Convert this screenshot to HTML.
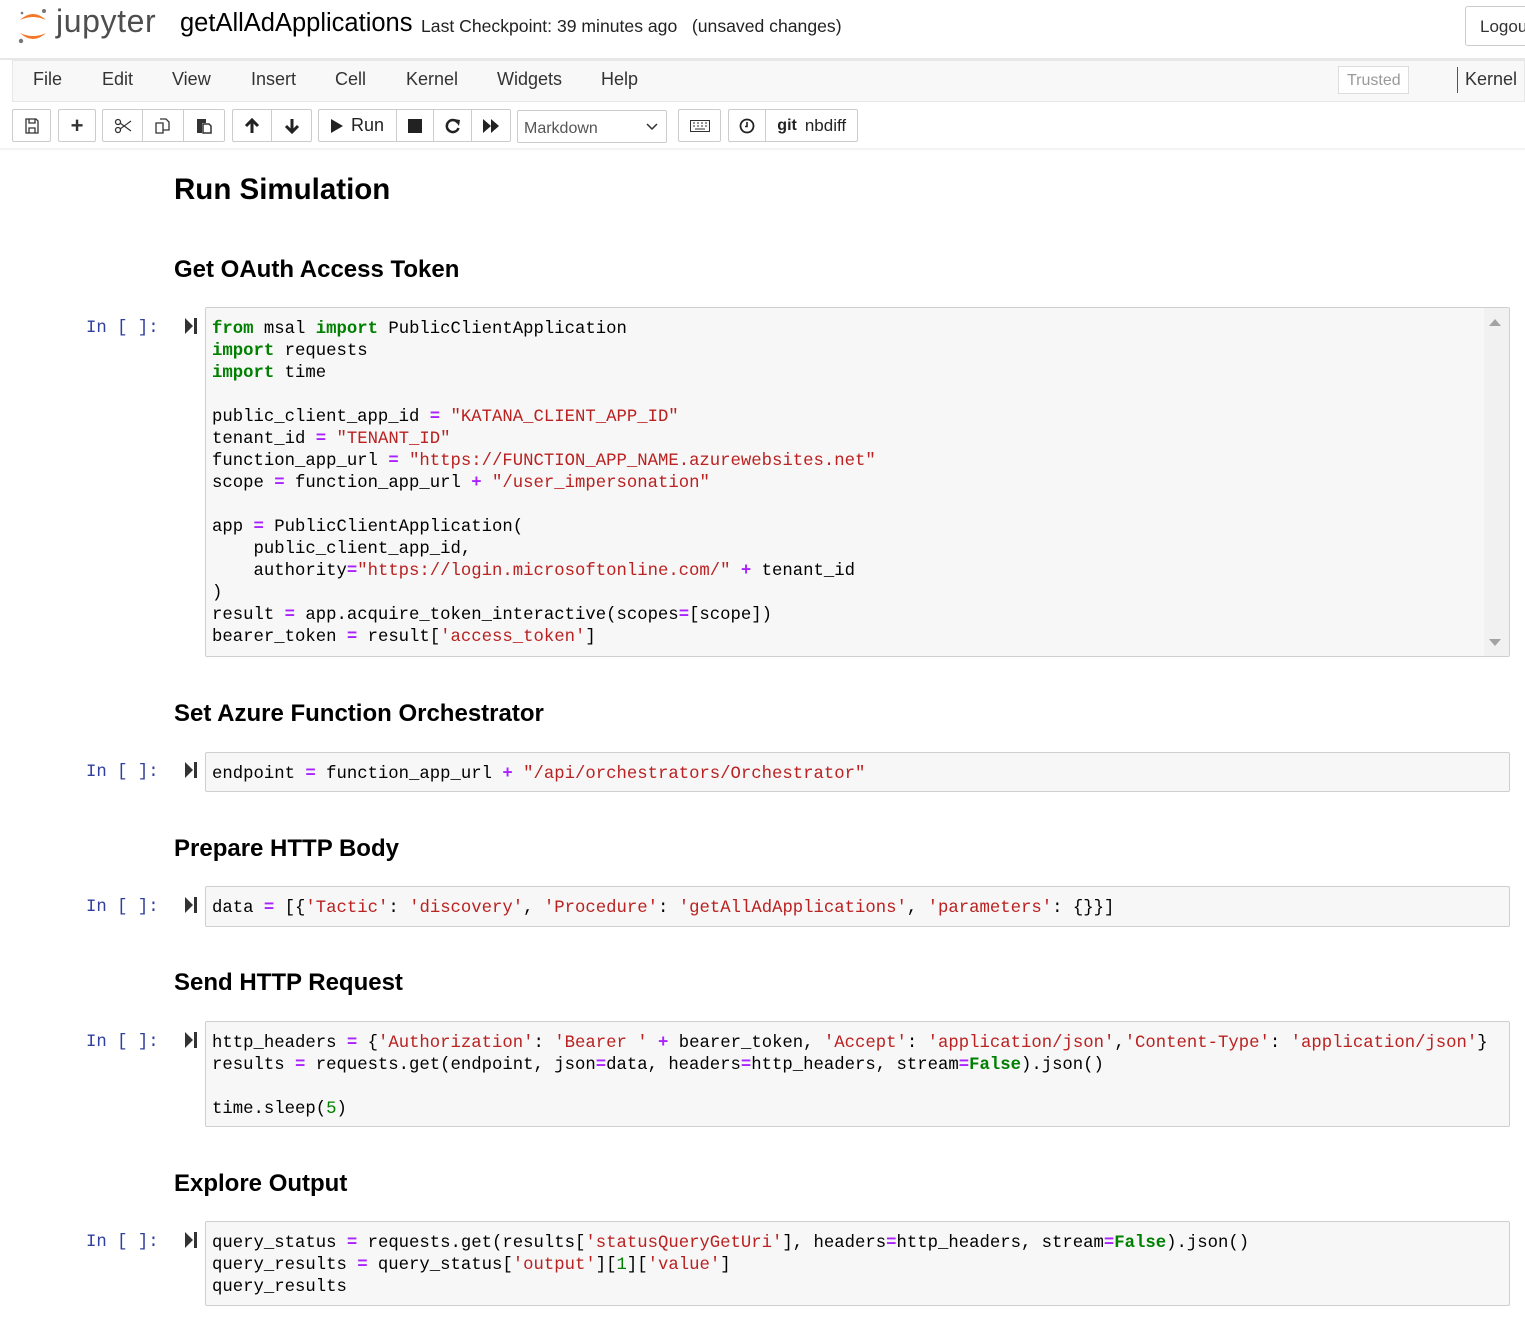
<!DOCTYPE html>
<html><head><meta charset="utf-8">
<style>
*{margin:0;padding:0;box-sizing:border-box}
body{width:1525px;height:1320px;background:#fff;font-family:"Liberation Sans",sans-serif;position:relative;overflow:hidden;color:#000}
.a{position:absolute}
.menu span{position:absolute;top:69px;font-size:18px;color:#333}
.btn{position:absolute;top:109px;height:33px;border:1px solid #ccc;border-radius:2px;background:#fff;display:flex;align-items:center;justify-content:center;font-size:18px;color:#333}
.grp{position:absolute;top:109px;height:33px;border:1px solid #ccc;border-radius:2px;background:#fff;display:flex}
.grp div{display:flex;align-items:center;justify-content:center;border-right:1px solid #ccc;height:100%;font-size:18px;color:#222}
.grp div:last-child{border-right:none}
h1{position:absolute;left:174px;font-size:29.5px;font-weight:bold}
h2{position:absolute;left:174px;font-size:24px;font-weight:bold}
.prompt{position:absolute;left:86px;font-family:"Liberation Mono",monospace;font-size:17.3px;color:#303f9f}
.run{position:absolute;left:185px;width:12px;height:16px}
.cell{position:absolute;left:205px;width:1305px;background:#f7f7f7;border:1px solid #cfcfcf;border-radius:2px;padding:11px 0 0 6px}
pre{font-family:"Liberation Mono",monospace;font-size:17.3px;line-height:22px;color:#000;white-space:pre}
.k{color:#008000;font-weight:bold}.s{color:#ba2121}.o{color:#aa22ff;font-weight:bold}.n{color:#008000}
</style></head><body>
<svg class="a" style="left:16px;top:6px" width="34" height="40" viewBox="0 0 34 40">
<path d="M4 14 Q17 2 30 14 Q17 8 4 14Z" fill="#f37726"/>
<path d="M4 27 Q17 39 30 27 Q17 33 4 27Z" fill="#f37726"/>
<circle cx="28" cy="5" r="2" fill="#767677"/><circle cx="5" cy="35" r="2.2" fill="#767677"/><circle cx="6" cy="7" r="1.3" fill="#767677"/>
</svg>
<div class="a" style="left:56px;top:3px;font-size:32px;color:#4e4e4e;letter-spacing:0.6px">jupyter</div>
<div class="a" style="left:180px;top:9px;font-size:25.5px">getAllAdApplications</div>
<div class="a" style="left:421px;top:16px;font-size:17.6px;color:#222">Last Checkpoint: 39 minutes ago&nbsp;&nbsp; (unsaved changes)</div>
<div class="a" style="left:1465px;top:6px;width:70px;height:40px;border:1px solid #ccc;border-radius:3px;font-size:17px;color:#333;padding:10px 0 0 14px">Logout</div>
<div class="a" style="left:0;top:58px;width:1525px;height:2px;background:#e7e7e7"></div>
<div class="a" style="left:12px;top:60px;width:1513px;height:42px;background:#f8f8f8;border:1px solid #e7e7e7"></div>
<div class="menu">
<span style="left:33px">File</span><span style="left:102px">Edit</span><span style="left:172px">View</span><span style="left:251px">Insert</span><span style="left:335px">Cell</span><span style="left:406px">Kernel</span><span style="left:497px">Widgets</span><span style="left:601px">Help</span>
</div>
<div class="a" style="left:1338px;top:66px;width:71px;height:28px;border:1px solid #ddd;background:#fff;font-size:16px;color:#999;padding:5px 0 0 8px">Trusted</div>
<div class="a" style="left:1457px;top:67px;width:1px;height:26px;background:#555"></div>
<div class="a" style="left:1465px;top:69px;font-size:18px;color:#333">Kernel</div>
<div class="btn" style="left:12px;width:39px"><svg width="14" height="16" viewBox="0 0 14 16"><path d="M1 1h10l2 2v12H1z M4 1v4h6V1 M4 10h6v5H4z" fill="none" stroke="#333" stroke-width="1.3"/></svg></div>
<div class="btn" style="left:58px;width:38px;font-weight:bold;font-size:22px">+</div>
<div class="grp" style="left:102px;width:123px"><div style="width:41px"><svg width="18" height="16" viewBox="0 0 18 16"><circle cx="4" cy="4" r="2.5" fill="none" stroke="#333" stroke-width="1.3"/><circle cx="4" cy="12" r="2.5" fill="none" stroke="#333" stroke-width="1.3"/><path d="M6 5L17 13M6 11L17 3" stroke="#333" stroke-width="1.2"/></svg></div><div style="width:41px"><svg width="16" height="16" viewBox="0 0 16 16"><path d="M1 5h7v10H1z M5 1h6l3 3v8H8" fill="none" stroke="#333" stroke-width="1.3"/></svg></div><div style="width:41px"><svg width="16" height="17" viewBox="0 0 16 17"><path d="M1 2h9v4H6v10H1z" fill="#333"/><path d="M7 7h6l2 2v7H7z" fill="none" stroke="#333" stroke-width="1.5"/></svg></div></div>
<div class="grp" style="left:232px;width:80px"><div style="width:40px"><svg width="16" height="16" viewBox="0 0 16 16"><path d="M8 15V3M2 8L8 2L14 8" fill="none" stroke="#222" stroke-width="3"/></svg></div><div style="width:40px"><svg width="16" height="16" viewBox="0 0 16 16"><path d="M8 1V13M2 8L8 14L14 8" fill="none" stroke="#222" stroke-width="3"/></svg></div></div>
<div class="grp" style="left:318px;width:193px"><div style="width:78px;gap:8px"><svg width="12" height="14"><path d="M0 0L12 7L0 14Z" fill="#222"/></svg>Run</div><div style="width:37px"><div style="width:14px;height:14px;background:#222;border:none"></div></div><div style="width:38px"><svg width="16" height="16" viewBox="0 0 16 16"><path d="M13 5A6 6 0 1 0 13.5 10" fill="none" stroke="#222" stroke-width="2.5"/><path d="M9 1L15 2L14 8Z" fill="#222"/></svg></div><div style="width:38px"><svg width="16" height="14"><path d="M0 0L8 7L0 14Z M8 0L16 7L8 14Z" fill="#222"/></svg></div></div>
<div class="btn" style="left:517px;width:150px;justify-content:space-between;padding:0 8px 0 6px;font-size:16px;color:#555;top:110px"><span style="margin-top:4px">Markdown</span><svg width="12" height="8"><path d="M1 1L6 6L11 1" fill="none" stroke="#333" stroke-width="1.5"/></svg></div>
<div class="btn" style="left:678px;width:43px"><svg width="20" height="12"><rect x="0.5" y="0.5" width="19" height="11" fill="none" stroke="#333"/><path d="M3 3h2M7 3h2M11 3h2M15 3h2M3 6h2M7 6h2M11 6h2M15 6h2M5 9h10" stroke="#333"/></svg></div>
<div class="grp" style="left:728px;width:130px"><div style="width:38px"><svg width="16" height="16"><circle cx="8" cy="8" r="6.5" fill="none" stroke="#222" stroke-width="1.8"/><path d="M8 4v4.5h-2" fill="none" stroke="#222" stroke-width="1.6"/></svg></div><div style="width:92px;font-size:17px"><b style="font-size:16px;margin-right:8px">git</b>nbdiff</div></div>
<div class="a" style="left:0;top:148px;width:1525px;height:3px;background:linear-gradient(#eee,#fff)"></div>

<h1 style="top:173px">Run Simulation</h1>
<h2 style="top:256px">Get OAuth Access Token</h2>
<h2 style="top:700px">Set Azure Function Orchestrator</h2>
<h2 style="top:835px">Prepare HTTP Body</h2>
<h2 style="top:969px">Send HTTP Request</h2>
<h2 style="top:1170px">Explore Output</h2>

<div class="prompt" style="top:319px">In [ ]:</div>
<div class="prompt" style="top:763px">In [ ]:</div>
<div class="prompt" style="top:898px">In [ ]:</div>
<div class="prompt" style="top:1033px">In [ ]:</div>
<div class="prompt" style="top:1233px">In [ ]:</div>
<svg class="run" style="top:318px" viewBox="0 0 12 16"><path d="M0 0L8 8L0 16Z" fill="#333"/><rect x="9" y="0" width="3" height="16" fill="#333"/></svg>
<svg class="run" style="top:762px" viewBox="0 0 12 16"><path d="M0 0L8 8L0 16Z" fill="#333"/><rect x="9" y="0" width="3" height="16" fill="#333"/></svg>
<svg class="run" style="top:897px" viewBox="0 0 12 16"><path d="M0 0L8 8L0 16Z" fill="#333"/><rect x="9" y="0" width="3" height="16" fill="#333"/></svg>
<svg class="run" style="top:1032px" viewBox="0 0 12 16"><path d="M0 0L8 8L0 16Z" fill="#333"/><rect x="9" y="0" width="3" height="16" fill="#333"/></svg>
<svg class="run" style="top:1232px" viewBox="0 0 12 16"><path d="M0 0L8 8L0 16Z" fill="#333"/><rect x="9" y="0" width="3" height="16" fill="#333"/></svg>

<div class="cell" style="top:307px;height:350px">
<pre><span class="k">from</span> msal <span class="k">import</span> PublicClientApplication
<span class="k">import</span> requests
<span class="k">import</span> time

public_client_app_id <span class="o">=</span> <span class="s">"KATANA_CLIENT_APP_ID"</span>
tenant_id <span class="o">=</span> <span class="s">"TENANT_ID"</span>
function_app_url <span class="o">=</span> <span class="s">"https://FUNCTION_APP_NAME.azurewebsites.net"</span>
scope <span class="o">=</span> function_app_url <span class="o">+</span> <span class="s">"/user_impersonation"</span>

app <span class="o">=</span> PublicClientApplication(
    public_client_app_id,
    authority<span class="o">=</span><span class="s">"https://login.microsoftonline.com/"</span> <span class="o">+</span> tenant_id
)
result <span class="o">=</span> app.acquire_token_interactive(scopes<span class="o">=</span>[scope])
bearer_token <span class="o">=</span> result[<span class="s">'access_token'</span>]</pre>
<div class="a" style="right:0;top:0;width:25px;height:348px;background:#f1f1f1"></div>
<svg class="a" style="right:8px;top:11px" width="12" height="7"><path d="M0 7L6 0L12 7Z" fill="#a3a3a3"/></svg>
<svg class="a" style="right:8px;bottom:10px" width="12" height="7"><path d="M0 0L6 7L12 0Z" fill="#a3a3a3"/></svg>
</div>
<div class="cell" style="top:752px;height:40px"><pre>endpoint <span class="o">=</span> function_app_url <span class="o">+</span> <span class="s">"/api/orchestrators/Orchestrator"</span></pre></div>
<div class="cell" style="top:886px;height:41px"><pre>data <span class="o">=</span> [{<span class="s">'Tactic'</span>: <span class="s">'discovery'</span>, <span class="s">'Procedure'</span>: <span class="s">'getAllAdApplications'</span>, <span class="s">'parameters'</span>: {}}]</pre></div>
<div class="cell" style="top:1021px;height:106px"><pre>http_headers <span class="o">=</span> {<span class="s">'Authorization'</span>: <span class="s">'Bearer '</span> <span class="o">+</span> bearer_token, <span class="s">'Accept'</span>: <span class="s">'application/json'</span>,<span class="s">'Content-Type'</span>: <span class="s">'application/json'</span>}
results <span class="o">=</span> requests.get(endpoint, json<span class="o">=</span>data, headers<span class="o">=</span>http_headers, stream<span class="o">=</span><span class="k">False</span>).json()

time.sleep(<span class="n">5</span>)</pre></div>
<div class="cell" style="top:1221px;height:85px"><pre>query_status <span class="o">=</span> requests.get(results[<span class="s">'statusQueryGetUri'</span>], headers<span class="o">=</span>http_headers, stream<span class="o">=</span><span class="k">False</span>).json()
query_results <span class="o">=</span> query_status[<span class="s">'output'</span>][<span class="n">1</span>][<span class="s">'value'</span>]
query_results</pre></div>
</body></html>
